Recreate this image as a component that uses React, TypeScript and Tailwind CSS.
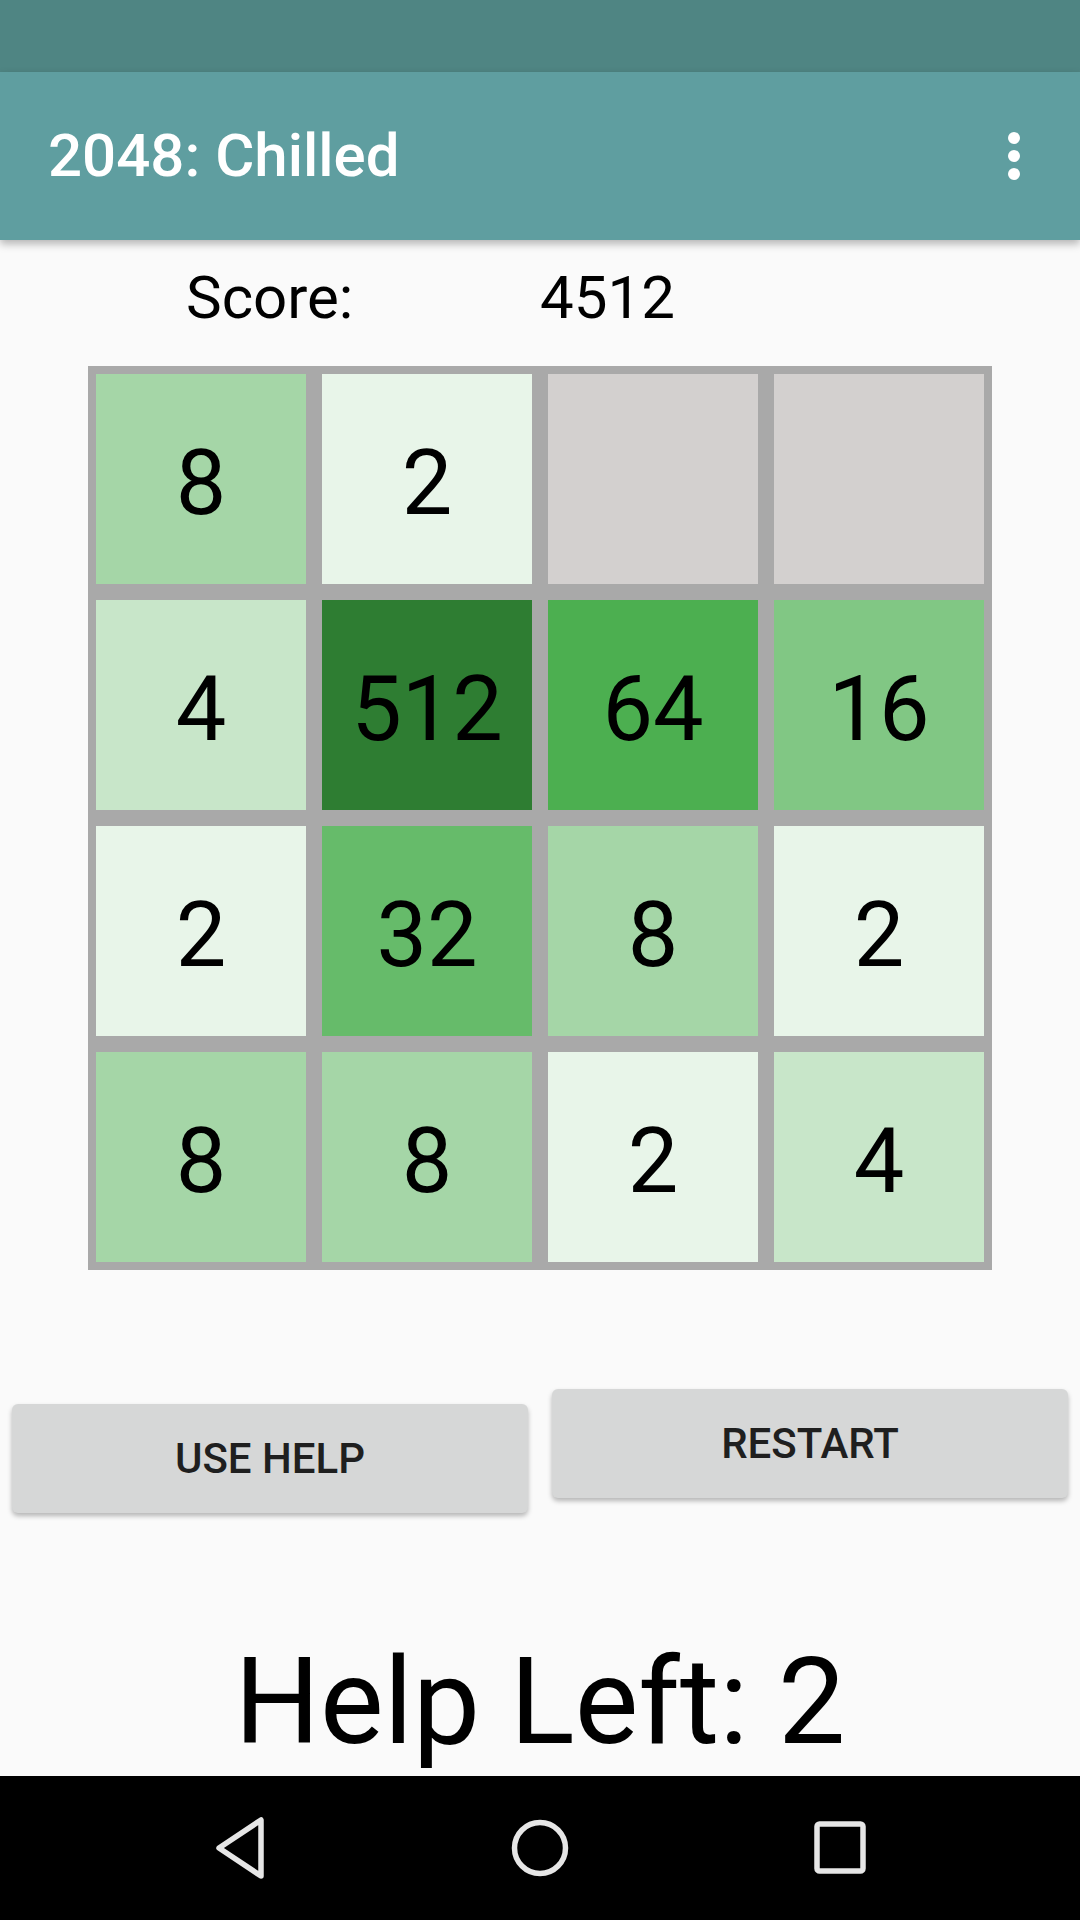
import React from "react";

const tiles: (number | null)[] = [8, 2, null, null, 4, 512, 64, 16, 2, 32, 8, 2, 8, 8, 2, 4];

function tileClass(v: number | null): string {
  switch (v) {
    case 2:
      return "bg-[#e8f5e9]";
    case 4:
      return "bg-[#c8e6c9]";
    case 8:
      return "bg-[#a5d6a7]";
    case 16:
      return "bg-[#81c784]";
    case 32:
      return "bg-[#66bb6a]";
    case 64:
      return "bg-[#4caf50]";
    case 512:
      return "bg-[#2e7d32]";
    default:
      return "bg-[#d3d0cf]";
  }
}

export default function App() {
  return (
    <div className="w-[1080px] h-[1920px] bg-[#fafafa] flex flex-col font-['Roboto',sans-serif] overflow-hidden">
      {/* status bar */}
      <div className="h-[72px] bg-[#4f8583] shrink-0" />
      {/* app bar */}
      <div className="relative z-10 h-[168px] bg-[#5f9ea0] shrink-0 flex items-center justify-between pl-[48px] pr-[60px] shadow-[0_4px_8px_rgba(0,0,0,0.28)]">
        <span className="text-white text-[60px] leading-none font-medium">2048: Chilled</span>
        <svg width="12" height="48" viewBox="0 0 12 48">
          <circle cx="6" cy="6" r="6" fill="#ffffff" />
          <circle cx="6" cy="24" r="6" fill="#ffffff" />
          <circle cx="6" cy="42" r="6" fill="#ffffff" />
        </svg>
      </div>

      {/* score */}
      <div className="mt-[28px] h-[60px] flex items-center text-[60px] leading-none text-black">
        <span className="ml-[186px] w-[354px]">Score:</span>
        <span>4512</span>
      </div>

      {/* grid */}
      <div className="mt-[38px] ml-[88px] w-[904px] h-[904px] bg-[#a9a9a9] p-[8px] grid grid-cols-4 grid-rows-4 gap-[16px]">
        {tiles.map((v, i) => (
          <div
            key={i}
            className={`${tileClass(v)} flex items-center justify-center pt-[9px] text-[90px] leading-none text-black`}
          >
            {v ?? ""}
          </div>
        ))}
      </div>

      {/* buttons */}
      <div className="mt-[119px] px-[12px] flex items-start gap-[24px]">
        <div className="mt-[15px] w-[516px] h-[109px] rounded-[6px] bg-[#d6d7d7] shadow-[0_3px_5px_rgba(0,0,0,0.28)] flex items-center justify-center text-[42px] font-medium text-[#1f1f1f] leading-none">
          USE HELP
        </div>
        <div className="w-[516px] h-[109px] rounded-[6px] bg-[#d6d7d7] shadow-[0_3px_5px_rgba(0,0,0,0.28)] flex items-center justify-center text-[42px] font-medium text-[#1f1f1f] leading-none">
          RESTART
        </div>
      </div>

      {/* help left */}
      <div className="mt-[129px] h-[120px] flex justify-center text-[120px] leading-none text-black">
        Help Left: 2
      </div>

      {/* nav bar */}
      <div className="mt-auto h-[144px] bg-black shrink-0 grid grid-cols-3 px-[90px] items-center">
        <div className="flex justify-center">
          <svg width="60" height="66" viewBox="0 0 60 66">
            <path
              d="M51 5 L51 61 L9 33 Z"
              fill="none"
              stroke="#e6e6e6"
              strokeWidth="5.5"
              strokeLinejoin="round"
            />
          </svg>
        </div>
        <div className="flex justify-center">
          <svg width="60" height="60" viewBox="0 0 60 60">
            <circle cx="30" cy="30" r="25.5" fill="none" stroke="#e6e6e6" strokeWidth="5.5" />
          </svg>
        </div>
        <div className="flex justify-center">
          <svg width="52" height="54" viewBox="0 0 52 54">
            <rect x="3" y="3" width="46" height="47" rx="2.5" fill="none" stroke="#e6e6e6" strokeWidth="5.5" />
          </svg>
        </div>
      </div>
    </div>
  );
}
